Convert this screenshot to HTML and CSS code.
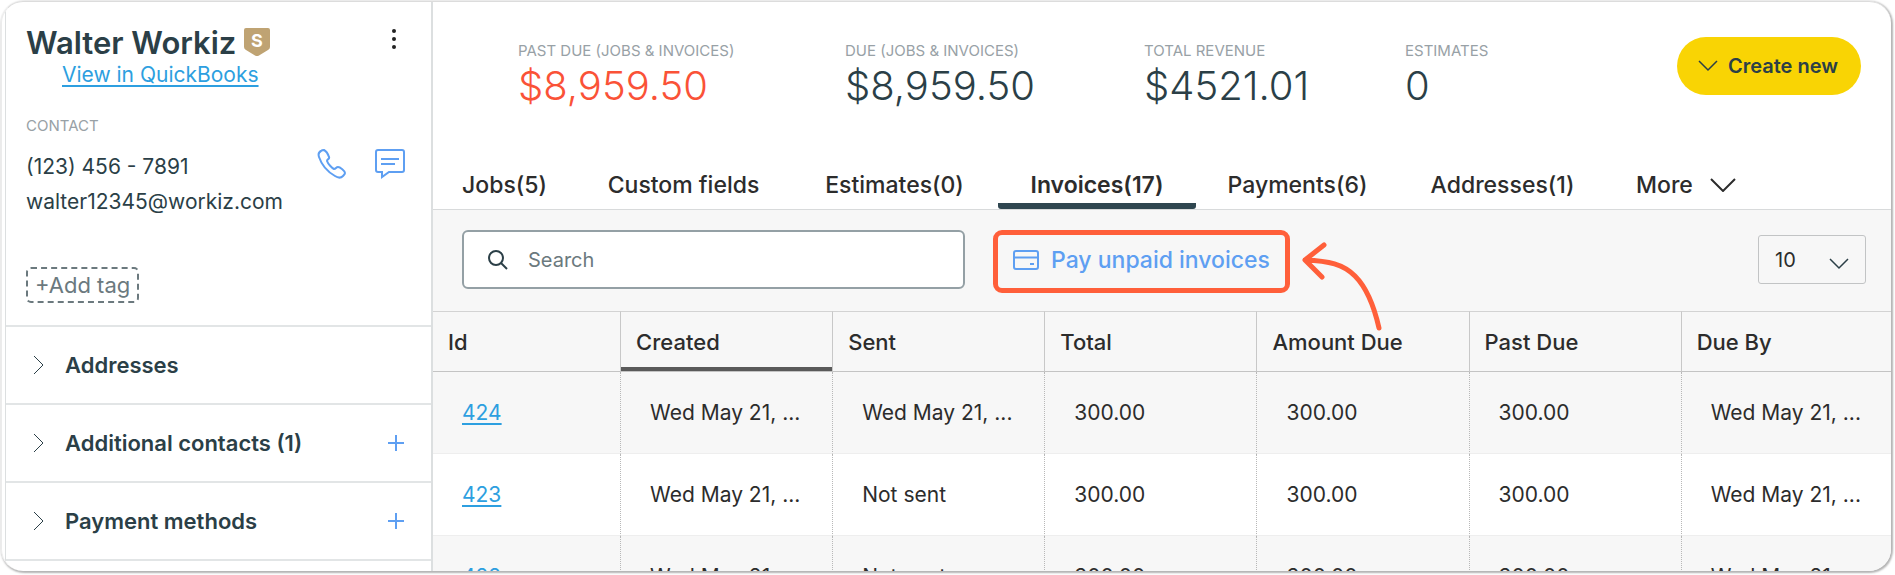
FILE: index.html
```html
<!DOCTYPE html>
<html lang="en">
<head>
<meta charset="utf-8">
<meta name="viewport" content="width=device-width, initial-scale=1">
<title>Walter Workiz</title>
<link rel="stylesheet" href="styles.css">
</head>
<body>
<div class="card">

<aside class="sidebar">
  <div class="client">
    <div class="client-head">
      <h1>Walter Workiz</h1>
      <svg class="badge" width="26" height="28" viewBox="0 0 26 28">
        <path d="M2 0h22a2 2 0 0 1 2 2v17q0 2-2 3l-9 5.500q-2 1-4 0L2 22q-2-1-2-3V2a2 2 0 0 1 2-2z" fill="#bfa373"/>
        <text x="13" y="19" text-anchor="middle">S</text>
      </svg>
      <button class="dots" aria-label="Options">
        <svg width="6" height="22" viewBox="0 0 6 22"><circle cx="3" cy="3" r="2"/><circle cx="3" cy="11" r="2"/><circle cx="3" cy="19" r="2"/></svg>
      </button>
    </div>
    <a class="quickbooks" href="#">View in QuickBooks</a>
    <h2 class="label">CONTACT</h2>
    <div class="contact">
      <div class="contact-text">
        <div>(123) 456 - 7891</div>
        <div>walter12345@workiz.com</div>
      </div>
      <button aria-label="Call">
        <svg width="30" height="30" viewBox="0 0 30 30"><path d="M4 2C2 3 1 5 2 8c3 9 9 15 16 19 3 2 6 2 8 0 1-1 2-2 2-3 0-2-5-6-7-6s-2 2-4 2c-2-1-6-5-7-8 0-2 3-2 2-4-1-3-3-6-5-7-1 0-2 0-3 1z"/></svg>
      </button>
      <button aria-label="Message">
        <svg width="30" height="30" viewBox="0 0 30 30"><path d="M3 1h24q2 0 2 2v18q0 2-2 2H14l-7 5v-5H3q-2 0-2-2V3q0-2 2-2zM6 10h18M6 15h14"/></svg>
      </button>
    </div>
    <button class="add-tag">+Add tag</button>
  </div>

  <div class="section">
    <svg class="chev" width="12" height="20" viewBox="0 0 12 20"><path d="M1 1l9 9-9 9"/></svg>
    <h3>Addresses</h3>
  </div>
  <div class="section">
    <svg class="chev" width="12" height="20" viewBox="0 0 12 20"><path d="M1 1l9 9-9 9"/></svg>
    <h3>Additional contacts (1)</h3>
    <button aria-label="Add contact"><svg width="16" height="16" viewBox="0 0 16 16"><path d="M8 0v16M0 8h16"/></svg></button>
  </div>
  <div class="section">
    <svg class="chev" width="12" height="20" viewBox="0 0 12 20"><path d="M1 1l9 9-9 9"/></svg>
    <h3>Payment methods</h3>
    <button aria-label="Add payment method"><svg width="16" height="16" viewBox="0 0 16 16"><path d="M8 0v16M0 8h16"/></svg></button>
  </div>
  <div class="section"></div>
</aside>

<main>
  <header>
    <dl class="stats">
      <div><dt>PAST DUE (JOBS &amp; INVOICES)</dt><dd class="red">$8,959.50</dd></div>
      <div><dt>DUE (JOBS &amp; INVOICES)</dt><dd>$8,959.50</dd></div>
      <div><dt>TOTAL REVENUE</dt><dd>$4521.01</dd></div>
      <div><dt>ESTIMATES</dt><dd>0</dd></div>
    </dl>
    <button class="create">
      <svg width="20" height="12" viewBox="0 0 20 12"><path d="M1 1l9 9 9-9"/></svg>
      Create new
    </button>
  </header>

  <nav class="tabs">
    <a href="#">Jobs(5)</a>
    <a href="#">Custom fields</a>
    <a href="#">Estimates(0)</a>
    <a href="#" class="active">Invoices(17)</a>
    <a href="#">Payments(6)</a>
    <a href="#">Addresses(1)</a>
    <a href="#">More <svg width="26" height="14" viewBox="0 0 26 14"><path d="M1 1l12 12L25 1"/></svg></a>
  </nav>

  <div class="toolbar">
    <label class="search">
      <svg width="20" height="20" viewBox="0 0 20 20"><circle cx="8" cy="8" r="7"/><path d="M13 13l6 6"/></svg>
      <input type="text" placeholder="Search" aria-label="Search">
    </label>
    <div class="highlight">
      <button class="pay">
        <svg width="26" height="20" viewBox="0 0 26 20"><rect x="1" y="1" width="24" height="18" rx="2"/><path d="M1 7.500h24M17 14h4"/></svg>
        Pay unpaid invoices
      </button>
      <svg class="arrow" width="84" height="92" viewBox="0 0 84 92"><path d="M23 4L4 19l17 17M4 19c24 1 38 4 50 16 11 11 19 30 24 52"/></svg>
    </div>
    <div class="page-size">
      <select aria-label="Rows per page"><option>10</option><option>25</option><option>50</option></select>
      <svg width="20" height="12" viewBox="0 0 20 12"><path d="M1 1l9 9 9-9"/></svg>
    </div>
  </div>

  <table>
    <thead>
      <tr><th>Id</th><th class="sorted">Created</th><th>Sent</th><th>Total</th><th>Amount Due</th><th>Past Due</th><th>Due By</th></tr>
    </thead>
    <tbody>
      <tr><td><a href="#">424</a></td><td>Wed May 21, ...</td><td>Wed May 21, ...</td><td>300.00</td><td>300.00</td><td>300.00</td><td>Wed May 21, ...</td></tr>
      <tr><td><a href="#">423</a></td><td>Wed May 21, ...</td><td>Not sent</td><td>300.00</td><td>300.00</td><td>300.00</td><td>Wed May 21, ...</td></tr>
      <tr><td><a href="#">422</a></td><td>Wed May 21, ...</td><td>Not sent</td><td>300.00</td><td>300.00</td><td>300.00</td><td>Wed May 21, ...</td></tr>
    </tbody>
  </table>
</main>

</div>
</body>
</html>
```
FILE: styles.css
```css
* {
  box-sizing: border-box;
}

body {
  margin: 0;
  background: #fff;
  color: #2b3f47;
  font-family: Inter, "Open Sans", sans-serif;
  font-size: 21px;
}

h1, h2, h3, dl, dd {
  margin: 0;
}

button {
  padding: 0;
  border: 0;
  background: none;
  font: inherit;
  color: inherit;
  cursor: pointer;
}

svg {
  display: block;
  flex: none;
  fill: none;
  stroke: currentColor;
  stroke-width: 2;
}

a {
  color: #2d9fe0;
}

.card {
  display: flex;
  height: calc(100vh - 5px);
  margin: 1px 4px 4px 1px;
  overflow: hidden;
  border-top: 1px solid #dcdcdc;
  border-left: 1px solid #ececec;
  border-radius: 22px;
  box-shadow: 1px 1px 2px 1px #b4b4b4;
}

/* client panel */
.sidebar {
  flex: none;
  width: 428px;
  margin-left: 3px;
  border-left: 1px solid #dcdfe0;
  border-right: 2px solid #dcdfe0;
}

.client {
  height: 323px;
  padding: 21px 22px 0 20px;
}

.client-head {
  display: flex;
  align-items: center;
  height: 38px;
}

h1 {
  font-size: 31px;
  font-weight: 600;
}

.badge {
  margin-left: 8px;
  stroke: none;
}

.badge text {
  fill: #fff;
  font-size: 18px;
  font-weight: 700;
}

.dots {
  margin: 0 12px 6px auto;
}

.dots svg {
  fill: #222;
  stroke: none;
}

.quickbooks {
  display: block;
  width: max-content;
  margin-left: 36px;
  line-height: 28px;
  text-underline-offset: 3px;
}

.label, dt {
  color: #98a1a6;
  font-size: 15px;
  font-weight: 400;
  line-height: 20px;
}

.label {
  margin-top: 27px;
}

.contact {
  display: flex;
  gap: 28px;
  padding: 13px 4px 0 0;
  color: #5e9ff2;
}

.contact-text {
  flex: 1;
  color: #2b3f47;
  line-height: 35px;
  white-space: nowrap;
}

.contact button {
  height: 30px;
}

.add-tag {
  height: 36px;
  margin-top: 48px;
  padding: 0 7px;
  border: 2px dashed #6b797e;
  border-radius: 5px;
  color: #6b797e;
  font-size: 22px;
}

.section {
  display: flex;
  align-items: center;
  gap: 20px;
  height: 78px;
  padding: 0 27px;
  border-top: 2px solid #e2e5e6;
}

.section h3 {
  flex: 1;
  font-size: 22px;
  font-weight: 600;
}

.section button {
  color: #5e9ff2;
}

.section .chev {
  stroke-width: 1;
}

/* totals */
main {
  flex: 1;
  min-width: 0;
}

header {
  display: flex;
  align-items: flex-start;
  justify-content: space-between;
  height: 153px;
  padding: 35px 30px 0 85px;
}

.stats {
  display: grid;
  grid-template-columns: 327px 299px 261px auto;
  padding-top: 4px;
}

dt {
  white-space: nowrap;
}

dd {
  font-size: 40px;
  font-weight: 300;
  line-height: 50px;
}

dd.red {
  color: #fa5237;
}

.create {
  display: flex;
  align-items: center;
  gap: 10px;
  height: 58px;
  padding: 0 23px 0 21px;
  border-radius: 29px;
  background: #f9d404;
  font-size: 20px;
  font-weight: 600;
  white-space: nowrap;
}

.create svg, .page-size svg {
  stroke-width: 1.5;
}

/* tabs */
.tabs {
  display: grid;
  grid-template-columns: 143px 215px 207px 198px 203px 207px auto;
  height: 55px;
  border-bottom: 1px solid #d8dadb;
}

.tabs a {
  display: flex;
  align-items: center;
  justify-content: center;
  gap: 17px;
  padding-top: 12px;
  border-bottom: 6px solid transparent;
  color: #2c2c2c;
  font-size: 23px;
  font-weight: 500;
  text-decoration: none;
  white-space: nowrap;
}

.tabs a:last-child {
  justify-content: flex-start;
  padding-left: 30px;
}

.tabs .active {
  border-radius: 3px;
  border-color: #2f4650;
  font-weight: 600;
}

/* toolbar */
.toolbar {
  display: flex;
  align-items: flex-start;
  height: 101px;
  padding: 20px 25px 0 29px;
  background: #f7f7f7;
}

.search {
  display: flex;
  align-items: center;
  gap: 20px;
  flex: 0 1 503px;
  height: 59px;
  padding: 0 24px;
  border: 2px solid #94a0a5;
  border-radius: 6px;
  background: #fff;
}

.search input {
  flex: 1;
  min-width: 0;
  padding: 0;
  border: 0;
  outline: 0;
  background: none;
  font: inherit;
  font-size: 20px;
}

.search input::placeholder {
  color: #6b797e;
}

.highlight {
  position: relative;
  margin-left: 28px;
}

.pay {
  display: flex;
  align-items: center;
  gap: 12px;
  height: 63px;
  padding: 0 15px 4px 15px;
  border: 5px solid #ff5f3a;
  border-radius: 9px;
  color: #5e9ff2;
  font-size: 23px;
  font-weight: 500;
  white-space: nowrap;
}

.arrow {
  position: absolute;
  top: 11px;
  left: 100%;
  margin-left: 11px;
  stroke: #ff5f3a;
  stroke-width: 5;
  stroke-linecap: round;
  stroke-linejoin: round;
}

.page-size {
  position: relative;
  margin: 5px 0 0 auto;
}

.page-size select {
  width: 108px;
  height: 49px;
  padding: 0 16px;
  border: 1px solid #c2c4c5;
  border-radius: 3px;
  background: transparent;
  color: #2c2c2c;
  font: inherit;
  font-size: 20px;
  appearance: none;
}

.page-size svg {
  position: absolute;
  top: 23px;
  right: 17px;
  pointer-events: none;
}

/* invoices */
table {
  width: 100%;
  table-layout: fixed;
  border-collapse: separate;
  border-spacing: 0;
  color: #2c2c2c;
}

th {
  width: 14.55%;
  height: 61px;
  padding: 0 15px;
  border-top: 1px solid #d3d3d3;
  border-bottom: 1px solid #c4c4c4;
  border-right: 1px solid #c8c8c8;
  background: #f7f7f7;
  font-size: 22px;
  font-weight: 500;
  text-align: left;
}

th:first-child {
  width: 12.9%;
}

th:last-child {
  width: auto;
}

th.sorted {
  box-shadow: inset 0 -4px #5a5a5a;
}

td {
  height: 82px;
  padding: 0 0 0 29px;
  border-right: 1px dotted #b8b8b8;
  border-bottom: 1px solid #eee;
  white-space: nowrap;
}

td a {
  text-underline-offset: 3px;
}

th:last-child, td:last-child {
  border-right: 0;
}

tbody tr:nth-child(odd) {
  background: #f7f7f7;
}
```
